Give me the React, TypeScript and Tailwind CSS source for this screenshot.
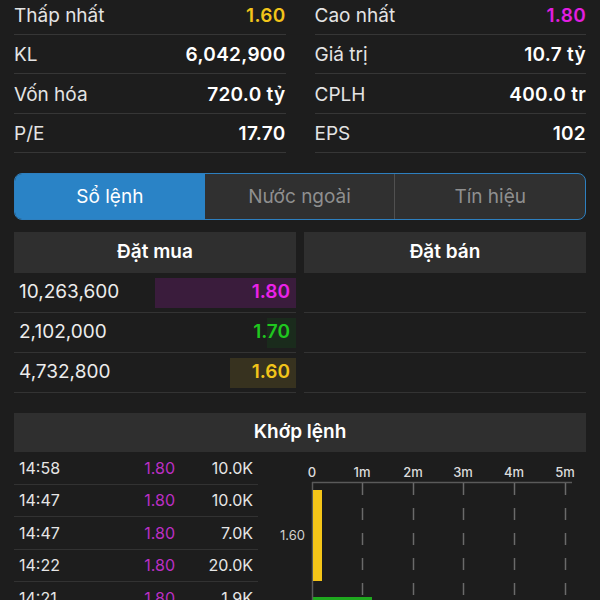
import React from "react";

const stats: [string, string, string, string, string, string][] = [
  ["Thấp nhất", "1.60", "text-[#f2c41a]", "Cao nhất", "1.80", "text-[#e21ee0]"],
  ["KL", "6,042,900", "text-white", "Giá trị", "10.7 tỷ", "text-white"],
  ["Vốn hóa", "720.0 tỷ", "text-white", "CPLH", "400.0 tr", "text-white"],
  ["P/E", "17.70", "text-white", "EPS", "102", "text-white"],
];

const buys = [
  { vol: "10,263,600", price: "1.80", w: 141, bar: "bg-[#3a1c3c]", color: "text-[#ea22e8]" },
  { vol: "2,102,000", price: "1.70", w: 29, bar: "bg-[#1a2b1c]", color: "text-[#1fc71f]" },
  { vol: "4,732,800", price: "1.60", w: 66, bar: "bg-[#37321f]", color: "text-[#f2c41a]" },
];

const trades = [
  ["14:58", "1.80", "10.0K"],
  ["14:47", "1.80", "10.0K"],
  ["14:47", "1.80", "7.0K"],
  ["14:22", "1.80", "20.0K"],
  ["14:21", "1.80", "1.9K"],
];

function StatRow({ label, value, cls }: { label: string; value: string; cls: string }) {
  return (
    <div className="flex h-[39.5px] shrink-0 items-center justify-between border-b border-[#363636] pt-[3px]">
      <span className="text-[19px] text-[#e4e4e4]">{label}</span>
      <span className={`text-[19px] font-semibold tracking-[0.3px] ${cls}`}>{value}</span>
    </div>
  );
}

function Chart() {
  const ticks = [
    { x: 54, l: "0" },
    { x: 104, l: "1m" },
    { x: 155, l: "2m" },
    { x: 205, l: "3m" },
    { x: 256, l: "4m" },
    { x: 307, l: "5m" },
  ];
  return (
    <svg width="327" height="148" viewBox="0 0 327 148" className="block">
      {ticks.map((t) => (
        <text
          key={t.l}
          x={t.x}
          y={25}
          textAnchor="middle"
          fontSize="13"
          fill="#dcdcdc"
          fontFamily="Inter, sans-serif"
          fontWeight="500"
        >
          {t.l}
        </text>
      ))}
      <line x1="54" y1="30.5" x2="314" y2="30.5" stroke="#5a5a5a" strokeWidth="1.5" />
      <line x1="54.5" y1="30" x2="54.5" y2="148" stroke="#5a5a5a" strokeWidth="1.5" />
      {ticks.slice(1).map((t) => (
        <line
          key={t.l}
          x1={t.x + 0.5}
          y1="31"
          x2={t.x + 0.5}
          y2="148"
          stroke="#6a6a6a"
          strokeWidth="1.5"
          strokeDasharray="12 13"
        />
      ))}
      <rect x="55" y="38" width="9" height="91" fill="#f5c518" />
      <text
        x="47"
        y="88"
        textAnchor="end"
        fontSize="13"
        fill="#d0d0d0"
        fontFamily="Inter, sans-serif"
      >
        1.60
      </text>
      <rect x="55" y="145" width="59" height="10" fill="#1fa81f" />
    </svg>
  );
}

export default function App() {
  return (
    <div className="h-[600px] w-[600px] overflow-hidden bg-[#1d1d1d] px-[14px] font-['Inter',sans-serif]">
      <div className="-mt-[5px] grid grid-cols-2 gap-x-[29px]">
        <div className="flex flex-col">
          {stats.map((s) => (
            <StatRow key={s[0]} label={s[0]} value={s[1]} cls={s[2]} />
          ))}
        </div>
        <div className="flex flex-col">
          {stats.map((s) => (
            <StatRow key={s[3]} label={s[3]} value={s[4]} cls={s[5]} />
          ))}
        </div>
      </div>

      <div className="mt-[20px] flex h-[47px] overflow-hidden rounded-[8px] border-[1.5px] border-[#2d7fbf] bg-[#303030]">
        <div className="flex flex-1 items-center justify-center bg-[#2a83c6] pt-[2px] text-[19px] text-white">
          Sổ lệnh
        </div>
        <div className="flex flex-1 items-center justify-center border-r border-[#505050] pt-[2px] text-[19px] text-[#8f8f8f]">
          Nước ngoài
        </div>
        <div className="flex flex-1 items-center justify-center pt-[2px] text-[19px] text-[#8f8f8f]">
          Tín hiệu
        </div>
      </div>

      <div className="mt-[12px] grid grid-cols-2 gap-x-[8px]">
        <div className="flex flex-col">
          <div className="flex h-[41px] items-center justify-center bg-[#2f2f2f] text-[19px] font-semibold text-white">
            Đặt mua
          </div>
          {buys.map((b) => (
            <div key={b.vol} className="flex h-[40px] items-center justify-between border-b border-[#333333] pl-[5px]">
              <span className="text-[19px] text-[#ececec]">{b.vol}</span>
              <div
                className={`flex h-[30px] items-center justify-end pr-[6px] ${b.bar}`}
                style={{ width: b.w }}
              >
                <span className={`text-[19px] font-semibold ${b.color}`}>{b.price}</span>
              </div>
            </div>
          ))}
        </div>
        <div className="flex flex-col">
          <div className="flex h-[41px] items-center justify-center bg-[#2f2f2f] text-[19px] font-semibold text-white">
            Đặt bán
          </div>
          {buys.map((b) => (
            <div key={b.vol} className="h-[40px] border-b border-[#333333]" />
          ))}
        </div>
      </div>

      <div className="mt-[20px] flex h-[39px] items-center justify-center bg-[#2f2f2f] text-[19px] font-semibold text-white">
        Khớp lệnh
      </div>
      <div className="flex">
        <div className="flex w-[244px] flex-col">
          {trades.map((t, i) => (
            <div key={i} className="flex h-[32.5px] shrink-0 items-center border-b border-[#323232] pl-[5px] pr-[5px] text-[16px]">
              <span className="w-[95px] text-[#e6e6e6]">{t[0]}</span>
              <span className="w-[61px] text-right text-[#bb2fc3]">{t[1]}</span>
              <span className="flex-1 text-right text-[#e6e6e6]">{t[2]}</span>
            </div>
          ))}
        </div>
        <Chart />
      </div>
    </div>
  );
}
